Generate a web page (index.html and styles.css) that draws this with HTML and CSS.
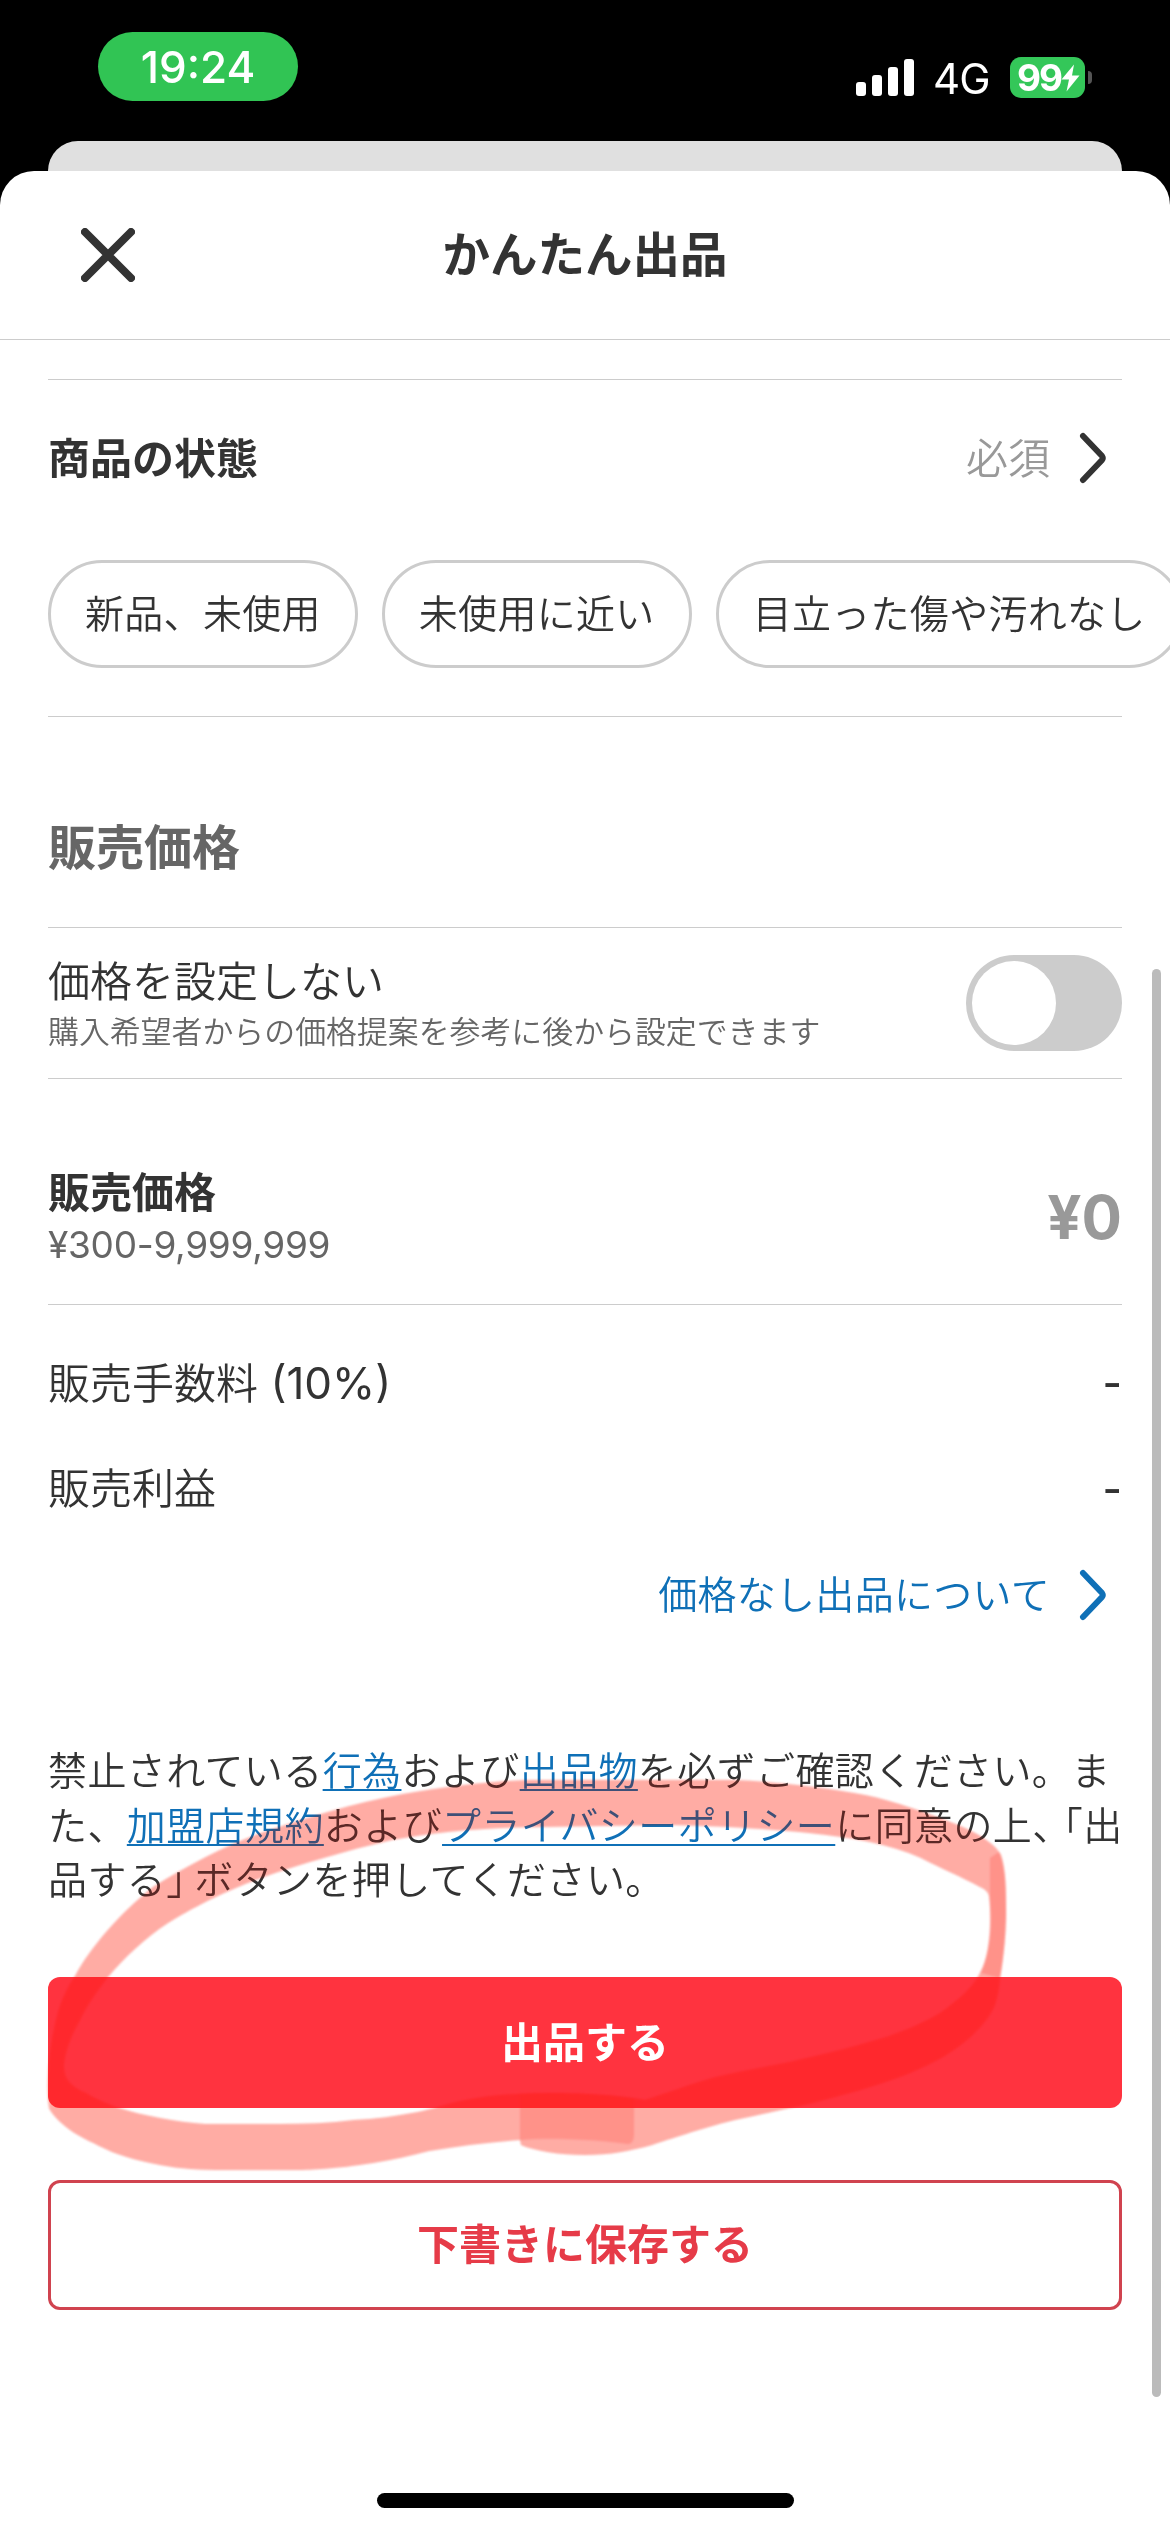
FILE: index.html
```html
<!DOCTYPE html>
<html lang="ja">
<head>
<meta charset="utf-8">
<title>かんたん出品</title>
<link rel="stylesheet" href="styles.css">
</head>
<body>
<div class="screen">
  <header class="status">
    <span class="clock">19:24</span>
    <div class="indicators">
      <svg class="signal" viewBox="0 0 58 38" width="58" height="38">
        <rect x="0" y="23" width="10" height="14" rx="3"/>
        <rect x="16" y="16" width="10" height="21" rx="3"/>
        <rect x="32" y="8" width="10" height="29" rx="3"/>
        <rect x="48" y="0" width="10" height="37" rx="3"/>
      </svg>
      <span class="network">4G</span>
      <span class="battery">99<svg viewBox="0 0 19 28" width="19" height="28"><path d="M13 0.5 0.5 15.5H8L5.5 27.5 18.5 11.5H11Z"/></svg></span>
      <span class="battery-tip"></span>
    </div>
  </header>
  <div class="sheet-behind"></div>
  <main class="sheet">
    <div class="titlebar">
      <svg class="close" viewBox="0 0 54 54" width="54" height="54"><path d="M4 4 50 50M50 4 4 50"/></svg>
      <h1>かんたん出品</h1>
    </div>
    <section class="condition">
      <div class="row condition-head">
        <h2>商品の状態</h2>
        <div class="more"><span class="required">必須</span><svg class="chevron" viewBox="0 0 28 52" width="28" height="52"><path d="M4 4 23 24Q24.500 26 23 28L4 48"/></svg></div>
      </div>
      <div class="chips">
        <span class="chip">新品、未使用</span>
        <span class="chip">未使用に近い</span>
        <span class="chip">目立った傷や汚れなし</span>
      </div>
    </section>
    <h2 class="section-title">販売価格</h2>
    <section class="row unset">
      <div class="unset-text">
        <p class="label">価格を設定しない</p>
        <p class="hint">購入希望者からの価格提案を参考に後から設定できます</p>
      </div>
      <span class="toggle"></span>
    </section>
    <section class="row price">
      <div>
        <h2>販売価格</h2>
        <p class="range">¥300-9,999,999</p>
      </div>
      <span class="amount">¥0</span>
    </section>
    <section class="fees">
      <div class="row fee"><span>販売手数料<span class="rate"> (10%)</span></span><span class="dash">-</span></div>
      <div class="row fee"><span>販売利益</span><span class="dash">-</span></div>
      <a class="more about">価格なし出品について<svg class="chevron" viewBox="0 0 28 52" width="28" height="52"><path d="M4 4 23 24Q24.500 26 23 28L4 48"/></svg></a>
    </section>
    <p class="terms">禁止されている<a>行為</a>および<a>出品物</a>を必ずご確認ください。ま<br>た、<a>加盟店規約</a>および<a>プライバシーポリシー</a>に同意の上<span class="comma">、</span>「出<br>品する<span class="close-quote">」</span>ボタンを押してください。</p>
    <div class="actions">
      <button class="primary">出品する</button>
      <button class="secondary">下書きに保存する</button>
    </div>
    <div class="home"></div>
  </main>
  <div class="scrollbar"></div>
  <svg class="marker shade" viewBox="0 0 1170 2532" width="1170" height="2532">
    <defs>
      <path id="loop" fill-rule="evenodd" d="M49 2108C46 2085 48 2050 58 2012C62 1999 67 1988 75 1976C90 1948 120 1913 153 1887C190 1864 225 1846 261 1833C305 1818 355 1803 403 1794C450 1786 500 1780 541 1780L734 1780C780 1782 830 1788 865 1795C895 1801 930 1814 958 1825C980 1834 996 1845 1001 1855C1006 1870 1006 1890 1006 1913C1006 1930 1004 1955 1000 1978C999 1990 997 1999 994 2007C986 2024 970 2040 943 2057C915 2073 880 2085 842 2095C800 2107 755 2115 727 2122C700 2129 670 2139 652 2145C630 2151 610 2155 585 2155C560 2155 535 2151 521 2145L520 2140C490 2142 460 2146 429 2151C410 2156 392 2160 373 2163C335 2169 310 2170 298 2170L224 2170C200 2170 180 2169 160 2165C140 2161 125 2157 112 2152C95 2144 80 2137 70 2130C58 2121 51 2113 49 2108ZM64 2063C66 2048 72 2034 80 2020C87 2005 97 1991 108 1977C125 1957 145 1938 168 1923C190 1909 225 1891 261 1878C300 1864 345 1851 392 1840C435 1832 490 1827 541 1827L660 1825C700 1825 760 1828 809 1833C850 1837 890 1844 921 1858C940 1868 962 1877 980 1887C986 1890 988 1892 989 1896C991 1912 991 1930 989 1943C987 1957 984 1965 980 1973C973 1988 957 2001 940 2013C925 2022 905 2031 883 2038C850 2048 820 2055 790 2062C765 2067 740 2071 716 2077C690 2084 665 2094 645 2100C620 2095 580 2093 550 2093C520 2093 490 2095 466 2100C445 2104 430 2110 418 2112C397 2116 375 2119 354 2120C330 2123 305 2124 280 2124L205 2124C190 2123 175 2121 160 2118C145 2115 131 2112 119 2108C105 2103 94 2098 86 2093C70 2086 63 2079 64 2063Z"/>
    </defs>
    <use href="#loop"/>
  </svg>
  <svg class="marker tint" viewBox="0 0 1170 2532" width="1170" height="2532">
    <use href="#loop"/>
    <path d="M520 2094C560 2092 605 2094 634 2099L634 2136Q633 2144 628 2144C600 2140 550 2137 520 2140Z"/>
    <path d="M990 1858 999 1852C1006 1870 1006 1890 1006 1913C1006 1930 1004 1955 1000 1978L981 1973C989 1955 991 1930 990 1895Z"/>
  </svg>
</div>
</body>
</html>
```
FILE: styles.css
```css
* { box-sizing: border-box; margin: 0; padding: 0; }
body { background: #000; }
.screen {
  position: relative;
  width: 1170px;
  height: 2532px;
  overflow: hidden;
  display: flex;
  flex-direction: column;
  background: #000;
  color: #333;
  font-family: Inter, "Noto Sans CJK JP", sans-serif;
  font-size: 42px;
  font-weight: 350;
  line-height: 52px;
  white-space: nowrap;
}
h1, h2 { font-size: inherit; font-weight: 700; }

.status {
  height: 141px;
  padding: 32px 78px 0 98px;
  display: flex;
  justify-content: space-between;
  align-items: flex-start;
  color: #fff;
}
.clock {
  width: 200px;
  height: 69px;
  border-radius: 35px;
  background: #31c454;
  font-size: 44px;
  font-weight: 500;
  line-height: 70px;
  text-align: center;
}
.indicators { display: flex; align-items: center; height: 41px; margin-top: 25px; }
.signal { fill: #fff; }
.network { width: 56px; margin: 0 21px 0 19px; font-size: 42px; font-weight: 400; letter-spacing: -1px; line-height: 44px; padding-top: 3px; }
.battery {
  width: 75px;
  height: 41px;
  padding-left: 7px;
  border-radius: 11px;
  background: #34c759;
  display: flex;
  align-items: center;
  font-size: 37px;
  font-weight: 700;
  letter-spacing: -2px;
  line-height: 41px;
}
.battery svg { fill: #fff; flex: none; }
.battery-tip { width: 4px; height: 13px; margin-left: 3px; border-radius: 0 4px 4px 0; background: #555; }

.sheet-behind { height: 30px; margin: 0 48px; border-radius: 30px 30px 0 0; background: #e0e0e0; }
.sheet { flex: 1; display: flex; flex-direction: column; border-radius: 34px 34px 0 0; background: #fff; }
.titlebar {
  height: 169px;
  padding: 0 81px;
  display: grid;
  grid-template-columns: 54px 1fr 54px;
  align-items: center;
  border-bottom: 1px solid #ccc;
}
.titlebar h1 { font-size: 47.500px; text-align: center; }
.close { fill: none; stroke: #333; stroke-width: 8; stroke-linecap: round; }

.row { display: flex; justify-content: space-between; align-items: center; }
.condition { margin: 39px 48px 0; border-top: 1px solid #ccc; border-bottom: 1px solid #ccc; padding-bottom: 48px; }
.condition-head { height: 156px; }
.condition-head h2, .required { padding-top: 1px; }
.more { display: flex; align-items: center; justify-content: flex-end; padding-right: 15px; gap: 29px; }
.required { color: #999; }
.chevron { fill: none; stroke: #333; stroke-width: 6; stroke-linecap: round; }
.chips { display: flex; gap: 24px; margin-top: 24px; }
.chip {
  flex: none;
  height: 108px;
  padding: 0 34px;
  border: 3px solid #ccc;
  border-radius: 54px;
  font-size: 39px;
  letter-spacing: .300px;
  line-height: 102px;
}
.section-title { height: 211px; margin: 0 48px; padding-top: 50px; border-bottom: 1px solid #ccc; color: #666; font-size: 48px; line-height: 161px; }
.unset { height: 151px; margin: 0 48px; border-bottom: 1px solid #ccc; }
.unset-text { padding-top: 8px; line-height: 50px; }
.hint { color: #666; font-size: 30.900px; }
.toggle { width: 156px; height: 96px; padding: 6px; border-radius: 48px; background: #ccc; }
.toggle::before { content: ""; display: block; width: 84px; height: 84px; border-radius: 50%; background: #fff; }
.price { height: 226px; margin: 0 48px; padding: 88px 0 33px; border-bottom: 1px solid #ccc; }
.range { color: #666; font-size: 37px; font-weight: 400; letter-spacing: -.300px; }
.amount { padding-bottom: 4px; color: #999; font-size: 60px; font-weight: 700; }
.fees { padding: 25px 48px 0; }
.fee { height: 106px; }
.rate { font-size: 44px; font-weight: 400; white-space: pre; }
.dash { font-weight: 500; }
.about { height: 106px; font-size: 39px; letter-spacing: .300px; color: #0f70b7; }
.about .chevron { stroke: #0f70b7; }
.terms { margin: 96px 48px 0; font-size: 39px; letter-spacing: .400px; line-height: 54.600px; }
.terms a { color: #0f70b7; text-decoration: underline; text-decoration-thickness: 2px; text-underline-offset: 4px; }
.comma { letter-spacing: -8px; }
.close-quote { letter-spacing: -11px; }
.actions { display: flex; flex-direction: column; gap: 72px; margin: 69px 48px 0; }
button { font: inherit; font-weight: 700; border-radius: 12px; }
.primary { height: 131px; padding-top: 2px; border: 0; background: #ff333f; color: #fff; }
.secondary { height: 130px; border: 3px solid #d0434f; background: #fff; color: #e63b48; }
.home { width: 417px; height: 15px; margin: auto auto 24px; border-radius: 8px; background: #000; }

/* Floating overlays */
.scrollbar { position: absolute; top: 969px; right: 9px; width: 9px; height: 1428px; border-radius: 5px; background: #bbb; }
.marker { position: absolute; inset: 0; pointer-events: none; filter: blur(1px); }
.shade { fill: #ffcdc6; mix-blend-mode: multiply; }
.tint { fill: rgba(255, 42, 32, .200); }
```
